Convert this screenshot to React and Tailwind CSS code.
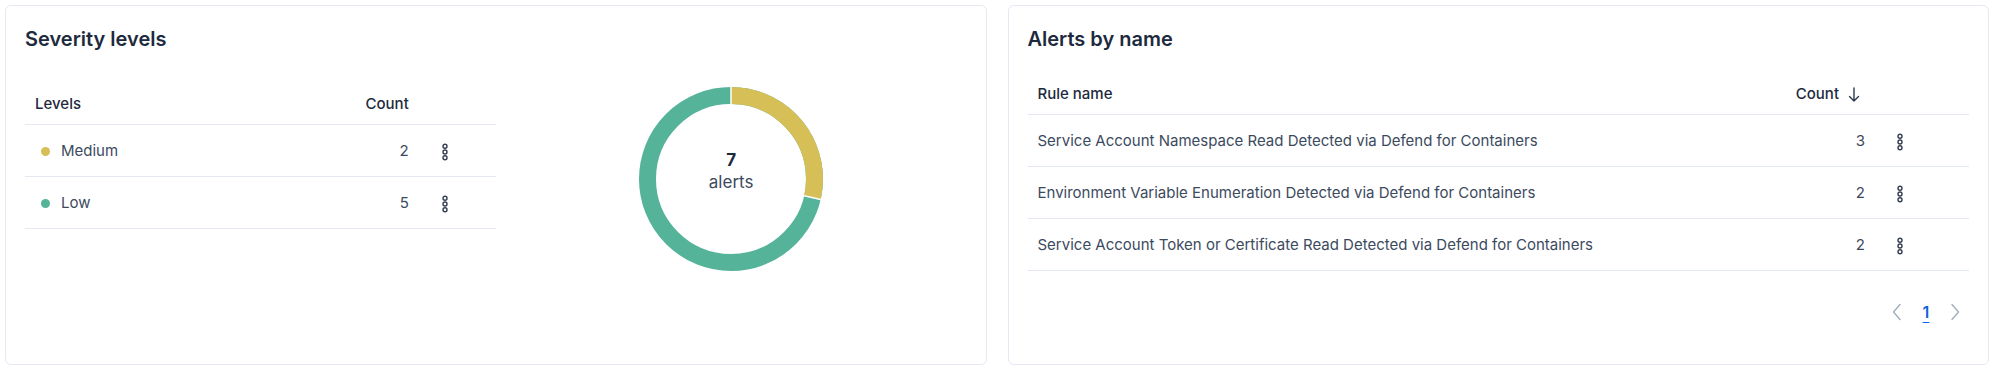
import React from 'react';

const font = { fontFamily: 'Inter, "Liberation Sans", sans-serif' };

const severity = [
  { name: 'Medium', count: 2, color: '#d6bf57' },
  { name: 'Low', count: 5, color: '#54b399' },
];

const rules = [
  { name: 'Service Account Namespace Read Detected via Defend for Containers', count: 3 },
  { name: 'Environment Variable Enumeration Detected via Defend for Containers', count: 2 },
  { name: 'Service Account Token or Certificate Read Detected via Defend for Containers', count: 2 },
];

const BoxesVertical = () => (
  <svg width="18" height="18" viewBox="0 0 18 18" fill="none" stroke="#343e50" strokeWidth="1.4">
    <circle cx="9" cy="3.2" r="2" />
    <circle cx="9" cy="9" r="2" />
    <circle cx="9" cy="14.8" r="2" />
  </svg>
);

const SortDown = () => (
  <svg width="14" height="17" viewBox="0 0 14 17" fill="none" stroke="#2b394f" strokeWidth="1.4" strokeLinecap="round" strokeLinejoin="round">
    <path d="M7 2v13M2.5 10.5 7 15l4.5-4.5" />
  </svg>
);

const Chevron = ({ dir }) => (
  <svg width="16" height="18" viewBox="0 0 16 18" fill="none" stroke="#a3adbd" strokeWidth="1.4" strokeLinecap="round" strokeLinejoin="round">
    {dir === 'left' ? <path d="M11 1.5 4.5 9l6.5 7.5" /> : <path d="M5 1.5 11.5 9 5 16.5" />}
  </svg>
);

const Donut = () => {
  const r = 83.5;
  const c = 2 * Math.PI * r;
  const yellow = (2 / 7) * c;
  const ang = (2 / 7) * 2 * Math.PI;
  const sep = (a) => ({
    x1: 93 + 74 * Math.sin(a),
    y1: 93 - 74 * Math.cos(a),
    x2: 93 + 93 * Math.sin(a),
    y2: 93 - 93 * Math.cos(a),
  });
  return (
    <div className="relative w-[186px] h-[186px]">
      <svg width="186" height="186" viewBox="0 0 186 186">
        <g transform="rotate(-90 93 93)">
          <circle cx="93" cy="93" r={r} fill="none" stroke="#54b399" strokeWidth="17" />
          <circle cx="93" cy="93" r={r} fill="none" stroke="#d6bf57" strokeWidth="17" strokeDasharray={`${yellow} ${c}`} />
        </g>
        <line {...sep(0)} stroke="#fff" strokeWidth="1.5" />
        <line {...sep(ang)} stroke="#fff" strokeWidth="1.5" />
      </svg>
      <div className="absolute inset-0 flex flex-col items-center justify-center pb-[15px]">
        <span className="text-[17px] leading-[20px] font-bold text-[#1d2a3e]">7</span>
        <span className="text-[17px] leading-[24px] text-[#3c4a5e]">alerts</span>
      </div>
    </div>
  );
};

export default function App() {
  return (
    <div className="flex gap-[21px] pt-[5px] pl-[5px] pr-[10px] bg-white" style={font}>
      {/* Severity levels */}
      <div className="flex-1 h-[360px] border border-[#e3e8f2] rounded-md px-[19px] pt-[21px]">
        <h2 className="text-[20px] leading-[24px] font-semibold text-[#1d2a3e]">Severity levels</h2>
        <div className="flex mt-[33px]">
          <div className="flex-1">
            <div className="flex items-center h-[41px] pt-[1px] border-b border-[#e3e8f2] text-[15px] font-medium text-[#1d2a3e]">
              <div className="flex-1 pl-[10px]">Levels</div>
              <div className="w-[80px] text-right pr-2">Count</div>
              <div className="w-[79px]" />
            </div>
            {severity.map((s) => (
              <div key={s.name} className="flex items-center h-[52px] pt-[2px] border-b border-[#e3e8f2] text-[15px] text-[#3c4a5e]">
                <div className="flex-1 pl-[16px] flex items-center gap-[11px]">
                  <span className="w-[9px] h-[9px] rounded-full" style={{ backgroundColor: s.color }} />
                  {s.name}
                </div>
                <div className="w-[80px] text-right pr-2">{s.count}</div>
                <div className="w-[56px] flex justify-center"><BoxesVertical /></div>
                <div className="w-[23px]" />
              </div>
            ))}
          </div>
          <div className="flex-1 flex justify-center pt-[2px]">
            <Donut />
          </div>
        </div>
      </div>

      {/* Alerts by name */}
      <div className="flex-1 h-[360px] border border-[#e3e8f2] rounded-md px-[19px] pt-[21px]">
        <h2 className="text-[20px] leading-[24px] font-semibold text-[#1d2a3e]">Alerts by name</h2>
        <div className="mt-[23px]">
          <div className="flex items-center h-[41px] border-b border-[#e3e8f2] text-[15px] font-medium text-[#1d2a3e]">
            <div className="flex-1 pl-[10px]">Rule name</div>
            <div className="w-[100px] flex justify-end items-center gap-[8px] pr-[12px]">
              Count <SortDown />
            </div>
            <div className="w-[96px]" />
          </div>
          {rules.map((r) => (
            <div key={r.name} className="flex items-center h-[52px] pt-[2px] border-b border-[#e3e8f2] text-[15px] text-[#3c4a5e]">
              <div className="flex-1 pl-[10px]">{r.name}</div>
              <div className="w-[100px] text-right pr-2">{r.count}</div>
              <div className="w-[54px] flex justify-center"><BoxesVertical /></div>
              <div className="w-[42px]" />
            </div>
          ))}
          <div className="flex justify-end items-center gap-[5px] mt-[29px] pr-[2px]">
            <div className="w-[24px] h-[24px] flex items-center justify-center"><Chevron dir="left" /></div>
            <div className="w-[24px] h-[24px] flex items-center justify-center text-[16px] font-semibold text-[#0b64dd] underline underline-offset-[4px]">1</div>
            <div className="w-[24px] h-[24px] flex items-center justify-center"><Chevron dir="right" /></div>
          </div>
        </div>
      </div>
    </div>
  );
}
